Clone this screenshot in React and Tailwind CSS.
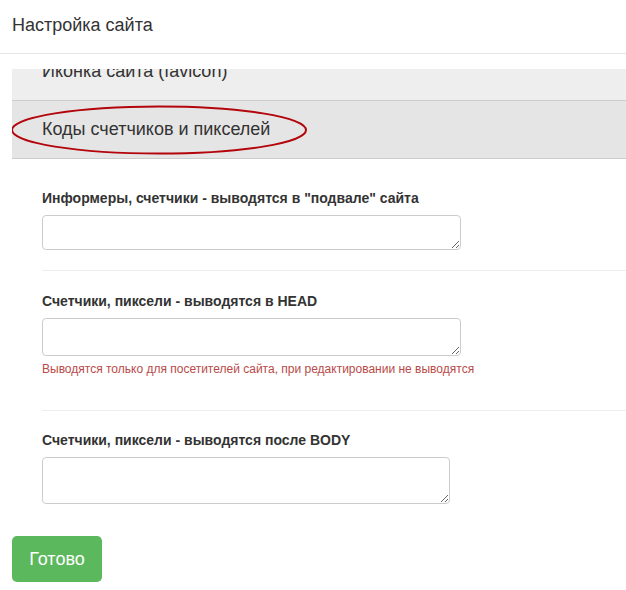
import React from "react";

export default function App() {
  const font = { fontFamily: '"Liberation Sans", Arial, sans-serif' };
  return (
    <div className="w-[626px] h-[590px] bg-white text-[#333] overflow-hidden" style={font}>
      <div className="h-[54px] border-b border-[#e5e5e5] flex items-center pl-[12px] text-[18px] leading-none pb-[3px]">
        Настройка сайта
      </div>
      <div className="pl-[12px] pt-[15px]">
        <div className="overflow-hidden">
          <div className="-mt-[26px] h-[58px] bg-[#eeeeee] border-b border-[#cccccc] flex items-center pl-[30px] text-[18px]">
            Иконка сайта (favicon)
          </div>
          <div className="relative h-[58px] bg-[#e5e5e5] border-b border-[#cccccc] flex items-center pl-[30px] text-[18px]">
            Коды счетчиков и пикселей
            <svg className="absolute left-[-2px] top-[3px]" width="300" height="52" viewBox="0 0 300 52">
              <ellipse cx="149" cy="26" rx="147" ry="23.5" fill="none" stroke="#b3050b" strokeWidth="2" />
            </svg>
          </div>
        </div>
      </div>
      <div className="pl-[42px] pt-[30px]">
        <div className="text-[14px] font-bold leading-[18px]">Информеры, счетчики - выводятся в "подвале" сайта</div>
        <textarea className="block mt-[8px] w-[419px] h-[35px] border border-[#cccccc] rounded-[4px] resize-y" />
        <div className="mt-[20px] border-t border-[#eeeeee]" />
        <div className="mt-[21px] text-[14px] font-bold leading-[18px]">Счетчики, пиксели - выводятся в HEAD</div>
        <textarea className="block mt-[8px] w-[419px] h-[38px] border border-[#cccccc] rounded-[4px] resize-y" />
        <div className="mt-[5px] text-[12px] leading-[17px] text-[#b94a48]">
          Выводятся только для посетителей сайта, при редактировании не выводятся
        </div>
        <div className="mt-[32px] border-t border-[#eeeeee]" />
        <div className="mt-[20px] text-[14px] font-bold leading-[18px]">Счетчики, пиксели - выводятся после BODY</div>
        <textarea className="block mt-[8px] w-[408px] h-[47px] border border-[#cccccc] rounded-[4px] resize-y" />
      </div>
      <div className="pl-[12px] pt-[32px]">
        <button className="w-[90px] h-[46px] rounded-[5px] bg-[#5cb85c] text-white text-[18px] flex items-center justify-center">
          Готово
        </button>
      </div>
    </div>
  );
}
